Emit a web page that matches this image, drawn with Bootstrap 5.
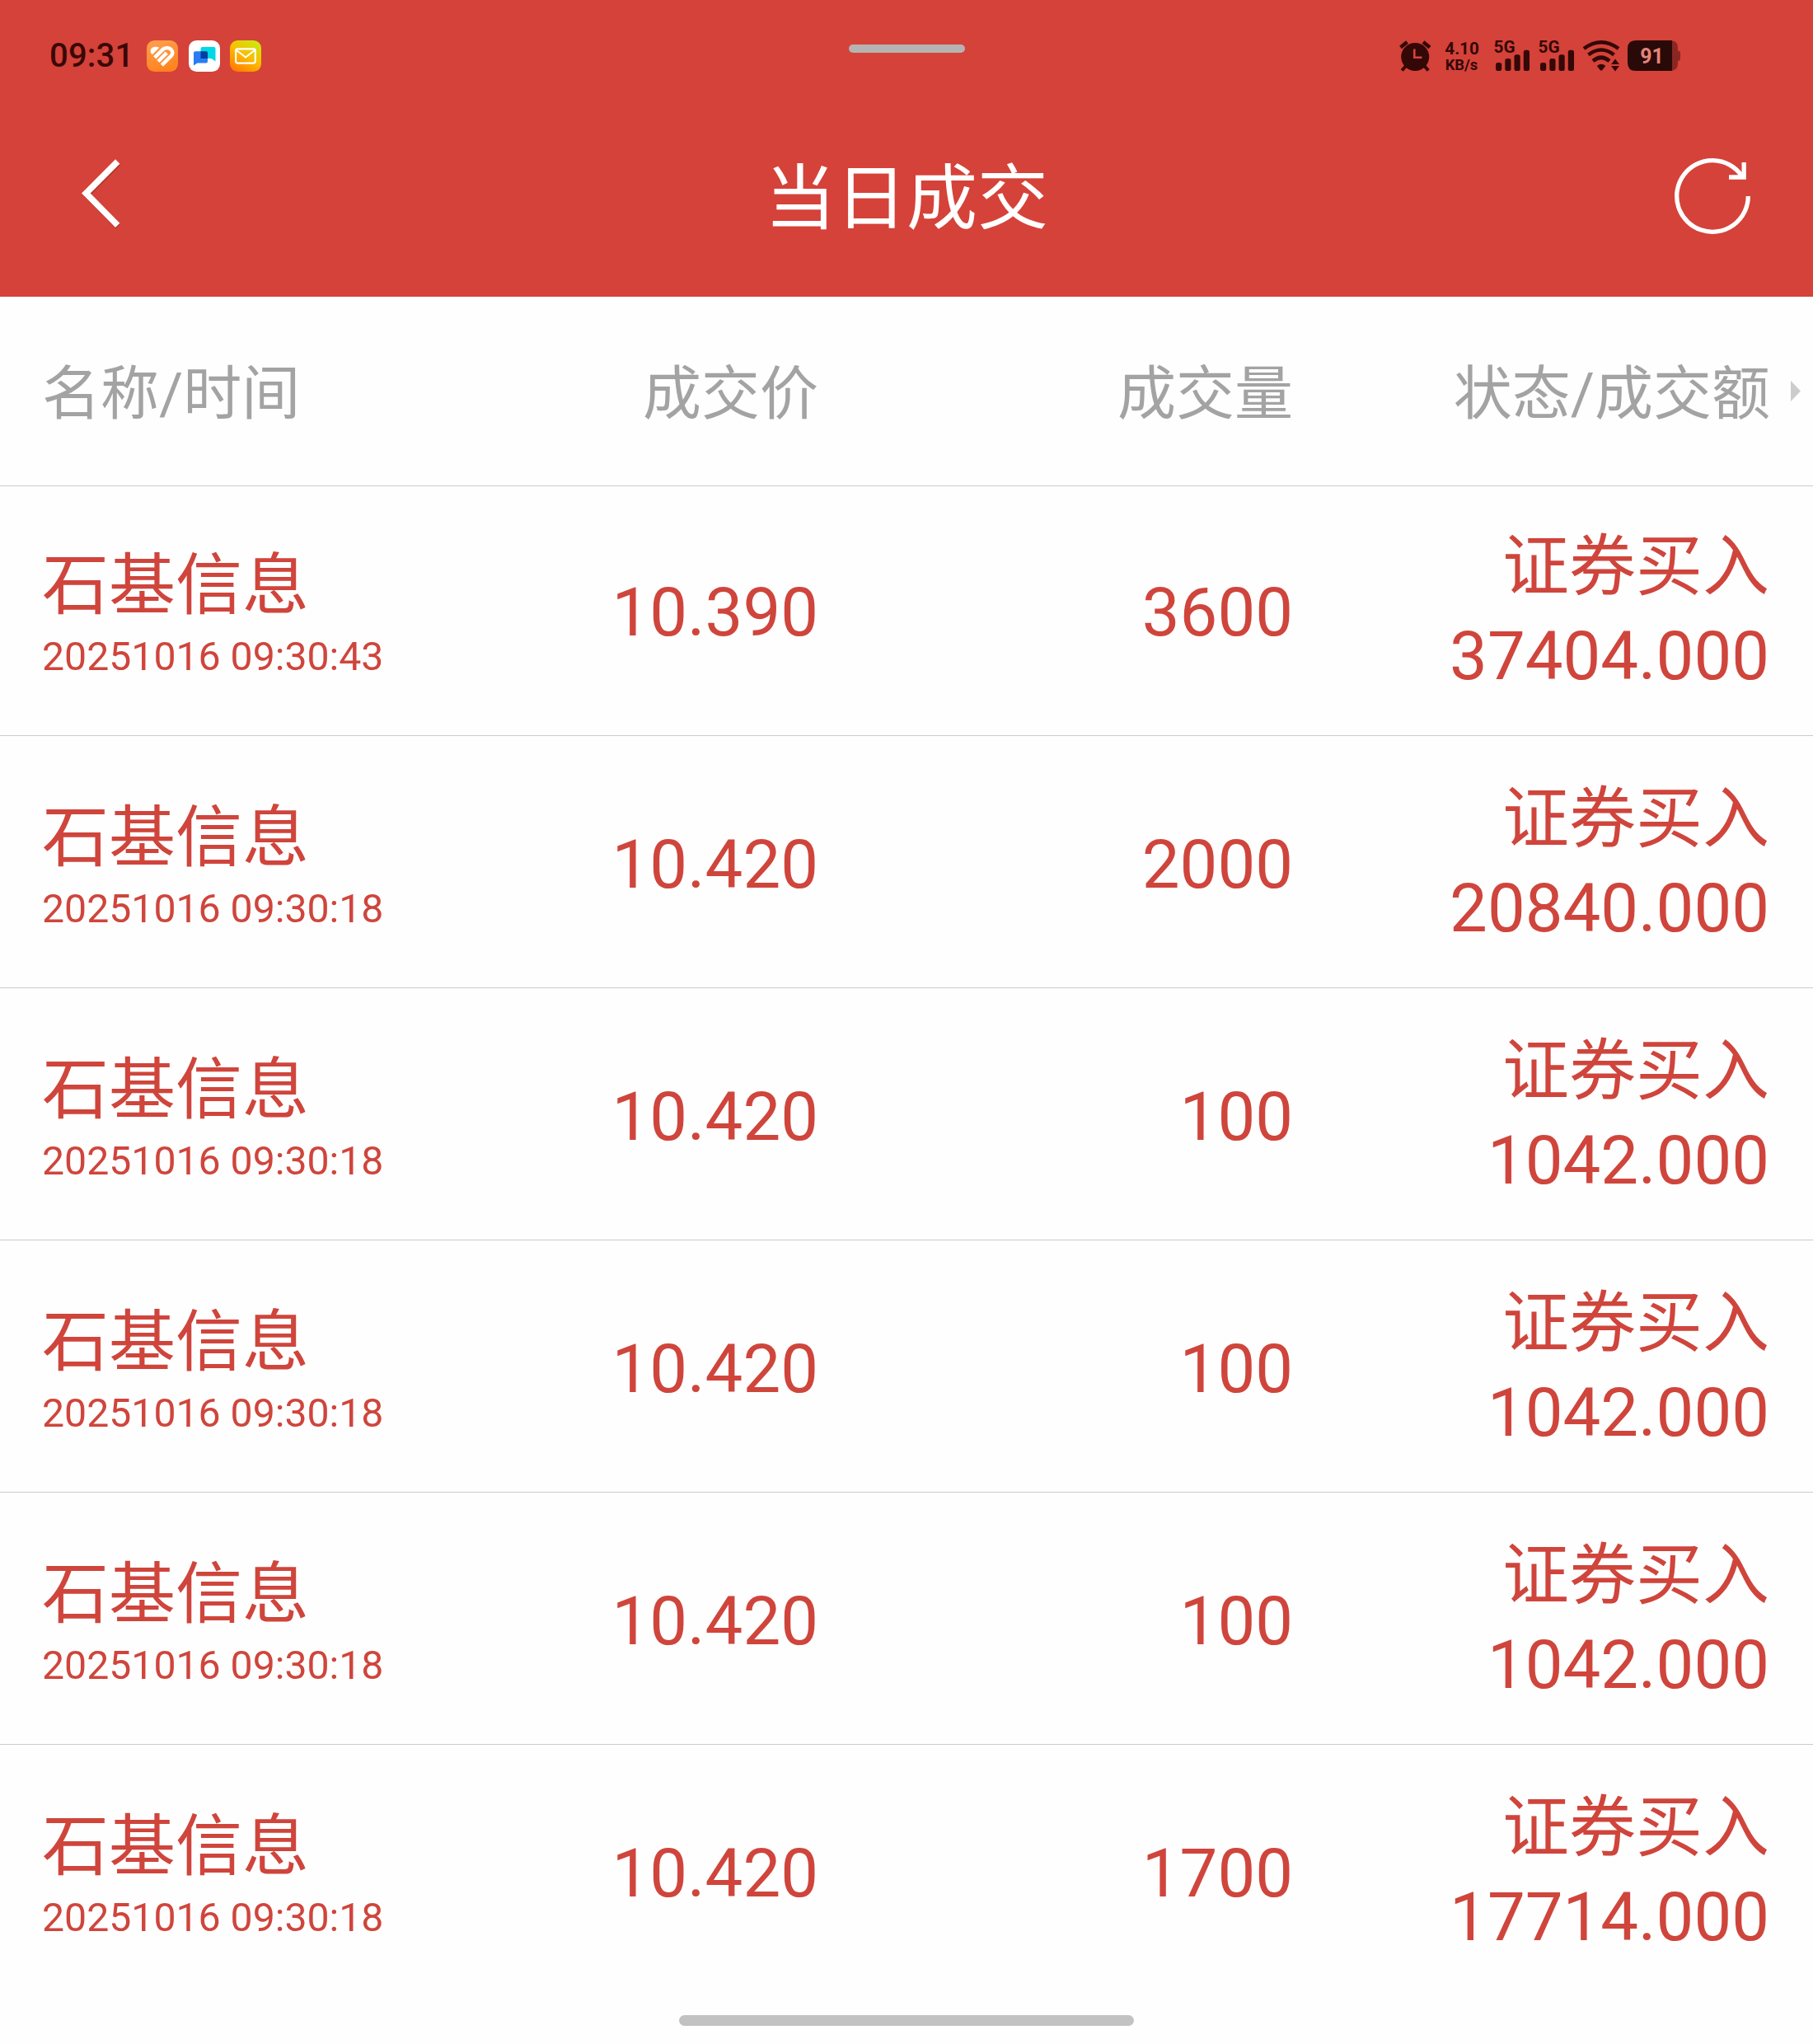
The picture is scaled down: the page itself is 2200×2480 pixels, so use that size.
<!DOCTYPE html>
<html lang="zh-CN">
<head>
<meta charset="utf-8">
<meta name="viewport" content="width=device-width, initial-scale=1">
<title>当日成交</title>
<link href="https://cdn.jsdelivr.net/npm/bootstrap@5.3.0/dist/css/bootstrap.min.css" rel="stylesheet">
<style>
  body { font-family: Roboto, "Noto Sans CJK SC", sans-serif; background: #fefefe; height: 2480px; overflow: hidden; }
  .top-area { background: #d54239; height: 360px; }
  .status-strip { height: 118px; color: #3a0806; }
  .status-side { flex: 0 0 1029.5px; height: 118px; }
  .side-start { padding: 49px 0 0 60px; }
  .side-end { padding: 37px 160px 0 0; }
  .clock-text { font-size: 40px; line-height: 38px; font-weight: 500; width: 118px; letter-spacing: .2px; }
  .app-icon { width: 38px; height: 38px; margin-right: 12.5px; }
  .pull-handle { width: 141px; height: 10px; margin-top: 54px; background: #b6b3b3; }
  .title-strip { height: 242px; }
  .page-title { font-size: 86px; line-height: 100px; margin: 74px 0 0; font-weight: 400; }
  .head-strip { height: 229px; color: #a3a3a3; font-size: 71px; line-height: 84px; padding: 76px 15px 0 51px; }
  .deal { height: 306px; border-top: 1px solid #cbcbcb; padding: 46px 53px 0 51px; color: #cf453c; font-size: 81.5px; }
  .deal.first-deal { height: 303px; padding-top: 43px; }
  .c-name { width: 366px; white-space: nowrap; }
  .c-num { width: 576px; text-align: right; }
  .c-sum { width: 579px; text-align: right; }
  .deal .c-sum { width: 578px; line-height: 109px; }
  .deal .c-name { padding-top: 37px; line-height: 81px; }
  .deal .c-num { padding-top: 70px; line-height: 81px; }
  .deal-label { font-size: 81px; }
  .deal-time { font-size: 48.2px; line-height: 56px; margin-top: 18px; }
  .more-arrow { width: 12px; height: 25px; margin: 26px 0 0 25px; }
  .home-bar { width: 552px; height: 13px; margin-top: 23px; background: #c2c2c2; }
</style>
</head>
<body>
<header class="top-area">
  <div class="status-strip d-flex align-items-start">
    <div class="status-side side-start d-flex align-items-start">
      <div class="clock-text">09:31</div>
      <svg class="app-icon" viewBox="0 0 38 38">
        <defs><linearGradient id="gOrange" x1="0" y1="0" x2="0.3" y2="1"><stop offset="0" stop-color="#ffa04f"/><stop offset="1" stop-color="#ff8420"/></linearGradient></defs>
        <rect width="38" height="38" rx="9.5" fill="url(#gOrange)"/>
        <path d="M6.800 17.300C3.800 14.300 4.200 10.800 6.500 9C9 7.200 12.600 7.300 15.300 8.800Z" fill="#fff"/>
        <path d="M9.700 20.800L19.600 10.900C22.500 8.800 26.800 8.700 29.500 11C32.200 13.600 31.800 16.600 29.600 18.900L18.300 30.200M14 25.500L24.300 15.200" fill="none" stroke="#fff" stroke-width="4.500"/>
      </svg>
      <svg class="app-icon" viewBox="0 0 38 38">
        <rect width="38" height="38" rx="9.500" fill="#fff"/>
        <path d="M16.500 8H30.500Q32.500 8 32.500 10V25.500L27.500 22H14.500V10Q14.500 8 16.500 8Z" fill="#00d9e5"/>
        <path d="M8 13.200H21Q23 13.200 23 15.200V25.500Q23 27.500 21 27.500H10.500L6 30.500V15.200Q6 13.200 8 13.200Z" fill="#2a7cf6"/>
        <path d="M14.500 13.200H21Q23 13.200 23 15.200V22H14.500Z" fill="#003f9e"/>
      </svg>
      <svg class="app-icon" viewBox="0 0 38 38">
        <defs>
          <linearGradient id="gMail" x1="0.2" y1="1" x2="0.8" y2="0"><stop offset="0" stop-color="#ff7a00"/><stop offset=".5" stop-color="#fdbb00"/><stop offset="1" stop-color="#c8ea10"/></linearGradient>
        </defs>
        <rect width="38" height="38" rx="9.500" fill="url(#gMail)"/>
        <rect x="7.200" y="10.400" width="23.600" height="17.200" rx="2" fill="none" stroke="#fff" stroke-width="2.100"/>
        <path d="M8 12 L19 20.500 L30 12" fill="none" stroke="#fff" stroke-width="2.100"/>
      </svg>
    </div>
    <div class="pull-handle rounded-pill"></div>
    <div class="status-side side-end d-flex justify-content-end align-items-start">
      <svg width="346" height="60" viewBox="0 -12 346 60" fill="#330806" font-family="Roboto, sans-serif" font-weight="700">
        <!-- alarm clock -->
        <g transform="translate(4,0)">
          <circle cx="19.200" cy="20" r="17"/>
          <path d="M1.500 8.500 L9.500 2 M37 8.500 L29 2" stroke="#330806" stroke-width="4.500"/>
          <path d="M8 31 L3.200 36.500 M30.500 31 L35.200 36.500" stroke="#330806" stroke-width="4"/>
          <path d="M18.300 10.500V20.800H27.500" fill="none" stroke="#d54239" stroke-width="2.600"/>
        </g>
        <!-- network speed -->
        <text x="59.300" y="17.200" font-size="20.500" textLength="41.500" lengthAdjust="spacingAndGlyphs">4.10</text>
        <text x="59.700" y="36" font-size="18" textLength="39.500" lengthAdjust="spacingAndGlyphs">KB/s</text>
        <!-- cellular signals -->
        <g>
          <text x="118.500" y="15" font-size="20.500" textLength="26" lengthAdjust="spacingAndGlyphs">5G</text>
          <rect x="121" y="27" width="7.200" height="10" rx="2.500"/><rect x="132.300" y="22" width="7.200" height="15" rx="2.500"/><rect x="143.500" y="17.300" width="7.200" height="19.700" rx="2.500"/><rect x="154.800" y="11.700" width="7.200" height="25.300" rx="2.500"/>
        </g>
        <g transform="translate(54,0)">
          <text x="118.500" y="15" font-size="20.500" textLength="26" lengthAdjust="spacingAndGlyphs">5G</text>
          <rect x="121" y="27" width="7.200" height="10" rx="2.500"/><rect x="132.300" y="22" width="7.200" height="15" rx="2.500"/><rect x="143.500" y="17.300" width="7.200" height="19.700" rx="2.500"/><rect x="154.800" y="11.700" width="7.200" height="25.300" rx="2.500"/>
        </g>
        <!-- wifi -->
        <g fill="none" stroke="#330806" stroke-width="4.600">
          <path d="M228 10 Q249 -5.500 270 10"/>
          <path d="M233.500 17.500 Q249 5.500 264.500 17.500"/>
          <path d="M239 25 Q249 16.500 259 25"/>
        </g>
        <path d="M243.800 31 Q249 26.500 254.300 31 L250.300 36 Q249 37.500 247.700 36Z"/>
        <path d="M266 22.500 L271 29H261Z M266 37.500 L271 31H261Z"/>
        <!-- battery -->
        <path d="M334 0.200Q342 1 342 9V12.500Q345 12.500 345 15V22Q345 25 342 25V28Q342 36 334 37Z" fill="#8a2722"/>
        <path d="M291 0H335V37H291Q281 37 281 27V10Q281 0 291 0Z" fill="#2a0a08"/>
        <text x="296.300" y="27.600" font-size="26" fill="#e58579" textLength="28.500" lengthAdjust="spacingAndGlyphs">91</text>
      </svg>
    </div>
  </div>
  <nav class="title-strip d-flex justify-content-between text-white">
    <svg width="260" height="242" viewBox="0 118 260 242">
      <path d="M143.200 198 L105 236 L143.200 275" fill="none" stroke="#8c2a24" stroke-opacity=".5" stroke-width="7.500"/>
      <path d="M142.700 196 L104.300 234.500 L142.700 273.300" fill="none" stroke="#fff" stroke-width="7.500"/>
    </svg>
    <h1 class="page-title">当日成交</h1>
    <svg width="260" height="242" viewBox="1940 118 260 242" fill="none" stroke="#fff" stroke-width="5.300">
      <path d="M2121.300 238 A43.300 43.300 0 1 1 2113.500 213.200"/>
      <path d="M2116.200 197 V215 H2098"/>
    </svg>
  </nav>
</header>

<main>
  <div class="head-strip d-flex">
    <div class="c-name">名称/时间</div>
    <div class="c-num">成交价</div>
    <div class="c-num">成交量</div>
    <div class="c-sum">状态/成交额</div>
    <svg class="more-arrow" viewBox="0 0 12 25"><path d="M0 0L12 12.500L0 25Z" fill="#ccc"/></svg>
  </div>

  <div class="deal first-deal d-flex">
    <div class="c-name"><div class="deal-label">石基信息</div><div class="deal-time">20251016 09:30:43</div></div>
    <div class="c-num">10.390</div>
    <div class="c-num">3600</div>
    <div class="c-sum"><div class="deal-label">证券买入</div><div>37404.000</div></div>
  </div>
  <div class="deal d-flex">
    <div class="c-name"><div class="deal-label">石基信息</div><div class="deal-time">20251016 09:30:18</div></div>
    <div class="c-num">10.420</div>
    <div class="c-num">2000</div>
    <div class="c-sum"><div class="deal-label">证券买入</div><div>20840.000</div></div>
  </div>
  <div class="deal d-flex">
    <div class="c-name"><div class="deal-label">石基信息</div><div class="deal-time">20251016 09:30:18</div></div>
    <div class="c-num">10.420</div>
    <div class="c-num">100</div>
    <div class="c-sum"><div class="deal-label">证券买入</div><div>1042.000</div></div>
  </div>
  <div class="deal d-flex">
    <div class="c-name"><div class="deal-label">石基信息</div><div class="deal-time">20251016 09:30:18</div></div>
    <div class="c-num">10.420</div>
    <div class="c-num">100</div>
    <div class="c-sum"><div class="deal-label">证券买入</div><div>1042.000</div></div>
  </div>
  <div class="deal d-flex">
    <div class="c-name"><div class="deal-label">石基信息</div><div class="deal-time">20251016 09:30:18</div></div>
    <div class="c-num">10.420</div>
    <div class="c-num">100</div>
    <div class="c-sum"><div class="deal-label">证券买入</div><div>1042.000</div></div>
  </div>
  <div class="deal d-flex">
    <div class="c-name"><div class="deal-label">石基信息</div><div class="deal-time">20251016 09:30:18</div></div>
    <div class="c-num">10.420</div>
    <div class="c-num">1700</div>
    <div class="c-sum"><div class="deal-label">证券买入</div><div>17714.000</div></div>
  </div>
</main>
<div class="home-bar rounded-pill mx-auto"></div>
<script src="https://cdn.jsdelivr.net/npm/bootstrap@5.3.0/dist/js/bootstrap.bundle.min.js"></script>
</body>
</html>
